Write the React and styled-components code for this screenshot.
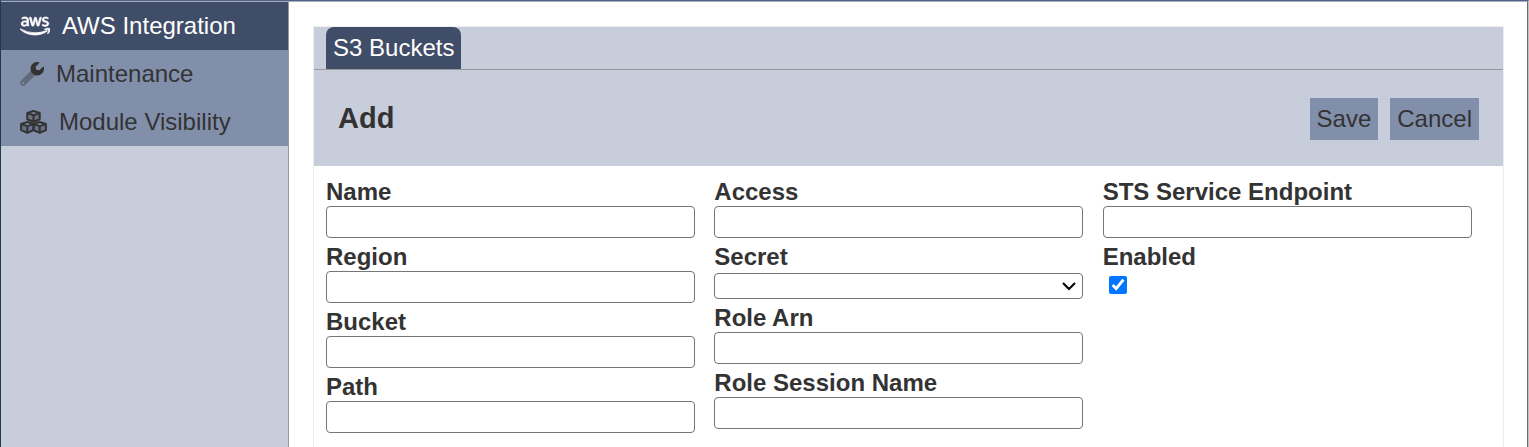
import React from 'react';
import { FaAws } from 'react-icons/fa';
import styled, { createGlobalStyle } from 'styled-components';

const GlobalStyle = createGlobalStyle`
  * {
    box-sizing: border-box;
  }

  body {
    margin: 0;
    background-color: #ffffff;
    color: #333333;
    font-family: 'Liberation Sans', Arial, sans-serif;
    font-size: 24px;
    line-height: 28px;
  }
`;

const Page = styled.div`
  display: flex;
  min-height: 100vh;
  border-top: 1px solid #4f628e;
  border-left: 1px solid #1f3d47;
  border-right: 1px solid #c0c0c0;
`;

const Content = styled.div`
  display: flex;
  flex: 1;
  border-top: 1px solid #a9adb8;
  border-right: 1px solid #6b6b6b;
`;

const Sidebar = styled.nav`
  flex: 0 0 288px;
  background-color: #c7cddb;
  border-right: 1px solid #999999;
`;

const SidebarLink = styled.a`
  display: flex;
  align-items: center;
  gap: 12px;
  height: 48px;
  padding: 0 19px;
  background-color: ${(props) => (props.$active ? '#404d68' : '#828fab')};
  color: ${(props) => (props.$active ? '#ffffff' : '#333333')};
  text-decoration: none;

  svg {
    flex: none;
    width: ${(props) => props.$iconWidth}px;
    height: 24px;
  }
`;

const AwsIcon = styled(FaAws)`
  stroke: currentColor;
  stroke-width: 16px;
`;

const Main = styled.main`
  flex: 1;
  display: flex;
  padding: 24px 23px 0 24px;
`;

const Panel = styled.section`
  flex: 1;
  border: 1px solid #eeeeee;
  border-bottom: none;
`;

const TabBar = styled.div`
  display: flex;
  padding: 0 12px;
  background-color: #c7cddb;
  border-bottom: 1px solid #999999;
`;

const Tab = styled.button`
  height: 42px;
  padding: 0 7px;
  border: none;
  border-radius: 8px 8px 0 0;
  background-color: #404d68;
  color: #ffffff;
  font: inherit;
`;

const PanelHeader = styled.header`
  display: flex;
  align-items: flex-start;
  justify-content: space-between;
  padding: 28px 24px 26px;
  background-color: #c7cddb;
`;

const PanelTitle = styled.h1`
  margin: 0;
  font-size: 29px;
  line-height: 40px;
`;

const Actions = styled.div`
  display: flex;
  gap: 12px;
`;

const Button = styled.button`
  height: 42px;
  padding: 0 7px;
  border: none;
  background-color: #828fab;
  color: #333333;
  font: inherit;
`;

const Form = styled.form`
  display: grid;
  grid-template-columns: repeat(3, 1fr);
  padding: 12px;
`;

const Column = styled.div`
  display: flex;
  flex-direction: column;
  gap: 5px;
`;

const Field = styled.div`
  display: flex;
  flex-direction: column;
  align-items: flex-start;
`;

const Label = styled.label`
  font-weight: bold;
`;

const TextInput = styled.input`
  width: 95%;
  height: 32px;
  padding: 0 4px;
  border: 1px solid #767676;
  border-radius: 4px;
  background-color: #ffffff;
  font: inherit;
`;

const SelectBox = styled.div`
  position: relative;
  display: flex;
  width: 95%;
  margin-top: 2px;

  svg {
    position: absolute;
    top: 8px;
    right: 7px;
    width: 14px;
    height: 10px;
    pointer-events: none;
  }
`;

const Select = styled.select`
  flex: 1;
  height: 26px;
  padding: 0 24px 0 4px;
  appearance: none;
  border: 1px solid #767676;
  border-radius: 4px;
  background-color: #ffffff;
  font-family: inherit;
  font-size: 20px;
`;

const Checkbox = styled.input`
  width: 18px;
  height: 18px;
  margin: 5px 6px;
`;

const WrenchIcon = () => (
  <svg viewBox="0 0 512 512" fill="currentColor" aria-hidden="true">
    <path
      opacity="0.4"
      d="M232.2 189.3L18.74 402.76c-24.99 24.99-24.99 65.51 0 90.5s65.51 24.99 90.5 0l213.21-213.21C280 264 248 232 232.2 189.3zM64 472c-13.25 0-24-10.75-24-24s10.75-24 24-24 24 10.75 24 24-10.75 24-24 24z"
    />
    <path d="M507.73 109.1c-2.24-9.03-13.54-12.09-20.12-5.51l-74.36 74.36-67.88-11.31-11.31-67.88 74.36-74.36c6.62-6.62 3.43-17.9-5.66-20.16-47.38-11.74-99.55.91-136.58 37.93-39.64 39.64-50.55 97.1-34.05 147.2C248 232 280 264 322.45 280.05c50.12 16.71 107.47 5.68 147.37-34.22 37.07-37.07 49.7-89.32 37.91-136.73z" />
  </svg>
);

const Cube = ({ x, y }) => (
  <g transform={`translate(${x} ${y})`}>
    <path
      fill="currentColor"
      fillOpacity="0.3"
      d="M-132 66L0 110v140l-132-54zM132 66L0 110v140l132-54z"
    />
    <path
      fill="none"
      stroke="currentColor"
      strokeWidth="44"
      strokeLinejoin="round"
      d="M0 22l132 44v130L0 250l-132-54V66zM-132 66L0 110l132-44M0 110v140"
    />
  </g>
);

const CubesIcon = () => (
  <svg viewBox="0 0 576 512" aria-hidden="true">
    <Cube x={288} y={0} />
    <Cube x={156} y={234} />
    <Cube x={420} y={234} />
  </svg>
);

const ChevronIcon = () => (
  <svg viewBox="0 0 14 10" fill="none" stroke="#000000" strokeWidth="2" aria-hidden="true">
    <path d="M1 2l6 6 6-6" />
  </svg>
);

const TextField = ({ id, label }) => (
  <Field>
    <Label htmlFor={id}>{label}</Label>
    <TextInput id={id} type="text" />
  </Field>
);

const App = () => {
  return (
    <>
      <GlobalStyle />
      <Page>
        <Content>
          <Sidebar>
            <SidebarLink href="#" $active $iconWidth={30}>
              <AwsIcon />
              AWS Integration
            </SidebarLink>
            <SidebarLink href="#" $iconWidth={24}>
              <WrenchIcon />
              Maintenance
            </SidebarLink>
            <SidebarLink href="#" $iconWidth={27}>
              <CubesIcon />
              Module Visibility
            </SidebarLink>
          </Sidebar>

          <Main>
            <Panel>
              <TabBar>
                <Tab type="button">S3 Buckets</Tab>
              </TabBar>

              <PanelHeader>
                <PanelTitle>Add</PanelTitle>
                <Actions>
                  <Button type="submit" form="bucket-form">Save</Button>
                  <Button type="button">Cancel</Button>
                </Actions>
              </PanelHeader>

              <Form id="bucket-form">
                <Column>
                  <TextField id="name" label="Name" />
                  <TextField id="region" label="Region" />
                  <TextField id="bucket" label="Bucket" />
                  <TextField id="path" label="Path" />
                </Column>

                <Column>
                  <TextField id="access" label="Access" />
                  <Field>
                    <Label htmlFor="secret">Secret</Label>
                    <SelectBox>
                      <Select id="secret">
                        <option value="" />
                      </Select>
                      <ChevronIcon />
                    </SelectBox>
                  </Field>
                  <TextField id="role-arn" label="Role Arn" />
                  <TextField id="role-session-name" label="Role Session Name" />
                </Column>

                <Column>
                  <TextField id="sts-endpoint" label="STS Service Endpoint" />
                  <Field>
                    <Label htmlFor="enabled">Enabled</Label>
                    <Checkbox id="enabled" type="checkbox" defaultChecked />
                  </Field>
                </Column>
              </Form>
            </Panel>
          </Main>
        </Content>
      </Page>
    </>
  );
};

export default App;
